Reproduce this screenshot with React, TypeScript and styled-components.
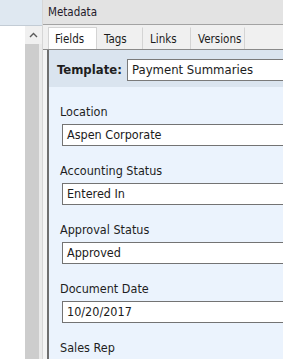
import styled, { createGlobalStyle } from "styled-components";

const GlobalStyle = createGlobalStyle`
  html, body {
    margin: 0;
    padding: 0;
    width: 283px;
    height: 359px;
    overflow: hidden;
    background: #ffffff;
  }
  body {
    font-family: "DejaVu Sans Condensed", "DejaVu Sans", sans-serif;
    color: #1b1b1b;
  }
`;

type Field = { label: string; value: string };

const fields: Field[] = [
  { label: "Location", value: "Aspen Corporate" },
  { label: "Accounting Status", value: "Entered In" },
  { label: "Approval Status", value: "Approved" },
  { label: "Document Date", value: "10/20/2017" },
  { label: "Sales Rep", value: "" },
];

const tabs = [
  { name: "Fields", width: 49 },
  { name: "Tags", width: 46 },
  { name: "Links", width: 48 },
  { name: "Versions", width: 54 },
];

function App() {
  return (
    <>
      <GlobalStyle />
      <Frame>
        <Tree>
          <TreeHeader />
          <TreeBody>
            <TreeList />
            <ScrollBar>
              <ScrollButton>
                <svg width="9" height="6" viewBox="0 0 9 6">
                  <polyline
                    points="1,5 4.5,1.5 8,5"
                    fill="none"
                    stroke="#5a5a5a"
                    strokeWidth="1.4"
                  />
                </svg>
              </ScrollButton>
              <ScrollThumb />
            </ScrollBar>
          </TreeBody>
        </Tree>
        <Metadata>
          <TitleBar>Metadata</TitleBar>
          <TabStrip>
            {tabs.map((t, i) => (
              <Tab key={t.name} $active={i === 0} $width={t.width}>
                {t.name}
              </Tab>
            ))}
          </TabStrip>
          <Panel>
            <TemplateBar>
              <TemplateLabel>Template:</TemplateLabel>
              <TemplateBox>Payment Summaries</TemplateBox>
            </TemplateBar>
            <FieldList>
              {fields.map((f) => (
                <FieldRow key={f.label}>
                  <FieldLabel>{f.label}</FieldLabel>
                  {f.value && <FieldBox>{f.value}</FieldBox>}
                </FieldRow>
              ))}
            </FieldList>
          </Panel>
        </Metadata>
      </Frame>
    </>
  );
}

export default App;

const Frame = styled.div`
  display: flex;
  width: 283px;
  height: 359px;
  overflow: hidden;
`;

const Tree = styled.div`
  width: 42px;
  flex: none;
  display: flex;
  flex-direction: column;
`;

const TreeHeader = styled.div`
  height: 25px;
  flex: none;
  background: #dfe8f1;
  border-bottom: 1px solid #c3ccd5;
`;

const TreeBody = styled.div`
  flex: 1;
  display: flex;
`;

const TreeList = styled.div`
  flex: 1;
  background: #ffffff;
`;

const ScrollBar = styled.div`
  width: 17px;
  display: flex;
  flex-direction: column;
  background: #eaeaea;
`;

const ScrollButton = styled.div`
  height: 18px;
  flex: none;
  display: flex;
  align-items: center;
  justify-content: center;
  background: #f0f0f0;
`;

const ScrollThumb = styled.div`
  flex: 1;
  background: #cdcdcd;
  margin-right: 3px;
`;

const Metadata = styled.div`
  flex: 1;
  display: flex;
  flex-direction: column;
  min-width: 0;
  border-left: 1px solid #d6d6d6;
  background: #f4f4f4;
`;

const TitleBar = styled.div`
  height: 25px;
  box-sizing: border-box;
  flex: none;
  padding-left: 5px;
  background: #e3e3e3;
  border-bottom: 1px solid #a3a3a3;
  font-size: 11.5px;
  line-height: 24px;
  color: #241a2a;
`;

const TabStrip = styled.div`
  height: 25px;
  box-sizing: border-box;
  flex: none;
  display: flex;
  align-items: flex-end;
  padding-left: 5px;
  background: #f0f0f0;
  border-bottom: 1px solid #8a8a8a;
`;

const Tab = styled.div<{ $active?: boolean; $width: number }>`
  width: ${(p) => p.$width}px;
  height: 22px;
  box-sizing: border-box;
  padding-left: 6px;
  font-size: 11.5px;
  line-height: 22px;
  color: #1b1b1b;
  background: ${(p) => (p.$active ? "#ffffff" : "transparent")};
  border: 1px solid ${(p) => (p.$active ? "#d4d4d4" : "transparent")};
  border-bottom: none;
  border-right: 1px solid #d4d4d4;
`;

const Panel = styled.div`
  flex: 1;
  display: flex;
  flex-direction: column;
  margin-left: 4px;
  border-left: 2px solid #6f6f6f;
  overflow: hidden;
`;

const TemplateBar = styled.div`
  height: 37px;
  box-sizing: border-box;
  flex: none;
  display: flex;
  align-items: flex-start;
  padding: 9px 0 0 8px;
  background: #dae4ef;
`;

const TemplateLabel = styled.div`
  width: 70px;
  flex: none;
  font-size: 13px;
  font-weight: bold;
  line-height: 22px;
  color: #1e1e1e;
`;

const TemplateBox = styled.div`
  flex: 1;
  height: 22px;
  box-sizing: border-box;
  padding-left: 4px;
  background: #ffffff;
  border: 1px solid #7a7a7a;
  border-right: none;
  font-size: 13px;
  line-height: 20px;
  white-space: nowrap;
`;

const FieldList = styled.div`
  flex: 1;
  padding: 17px 0 0 11px;
  background: #ebf3fd;
`;

const FieldRow = styled.div`
  display: flex;
  flex-direction: column;
  margin-bottom: 17px;
`;

const FieldLabel = styled.div`
  height: 16px;
  font-size: 12.5px;
  line-height: 16px;
  color: #1e1e1e;
  white-space: nowrap;
`;

const FieldBox = styled.div`
  height: 22px;
  box-sizing: border-box;
  margin: 4px 0 0 2px;
  padding-left: 4px;
  background: #ffffff;
  border: 1px solid #737373;
  border-right: none;
  font-size: 12.5px;
  line-height: 20px;
  white-space: nowrap;
`;
